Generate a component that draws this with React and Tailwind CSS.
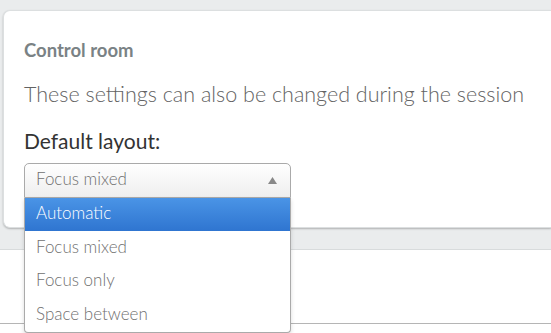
import React from 'react';

const options = ['Automatic', 'Focus mixed', 'Focus only', 'Space between'];

const App = () => {
  return (
    <div
      className="relative w-[551px] h-[333px] overflow-hidden bg-[#eaeced]"
      style={{ fontFamily: 'Lato, "Open Sans", sans-serif' }}
    >
      <div className="pt-[10px] pl-[3px]">
        <div className="h-[218px] bg-white rounded-tl-[7px] rounded-bl-[7px] border border-r-0 border-[#dcdfe0] shadow-[0_1px_2px_rgba(0,0,0,0.25)] pl-[20px] pt-[28px]">
          <h3 className="text-[18.5px] font-bold text-[#7a8285] leading-[22px]">Control room</h3>
          <p className="mt-[20px] text-[21.5px] font-light text-[#636363] leading-[26px]">
            These settings can also be changed during the session
          </p>
          <p className="mt-[21px] text-[21px] text-[#333] leading-[26px]">Default layout:</p>
        </div>
      </div>
      <div className="mt-[21px] border-t border-[#d8dbdc] bg-white h-[75px] border-b border-b-[#b5b5b5]"></div>
      <div className="bg-white h-[10px]"></div>

      {/* open select */}
      <div className="absolute left-[24px] top-[163px] w-[267px]">
        <div className="h-[35px] flex items-center justify-between pl-[11px] pr-[13px] pb-[4px] rounded-t-[5px] border border-[#aaa] bg-gradient-to-b from-white to-[#eeeeee] text-[17px] font-light text-[#6f6f6f]">
          <span>Focus mixed</span>
          <svg width="9" height="7" viewBox="0 0 9 7" className="mt-[3px]">
            <path d="M0 7 L4.5 0 L9 7 Z" fill="#888" />
          </svg>
        </div>
        <ul className="border border-t-0 border-[#aaa] rounded-b-[4px] bg-white shadow-[0_2px_4px_rgba(0,0,0,0.15)]">
          {options.map((opt, i) => (
            <li
              key={opt}
              className={
                i === 0
                  ? 'h-[33px] flex items-center pl-[11px] pb-[3px] text-[17px] font-light text-white bg-gradient-to-b from-[#4a94e6] to-[#2f75d0]'
                  : 'h-[33.5px] flex items-center pl-[11px] pb-[3px] text-[17px] font-light text-[#707070]'
              }
            >
              {opt}
            </li>
          ))}
        </ul>
      </div>
    </div>
  );
};

export default App;
